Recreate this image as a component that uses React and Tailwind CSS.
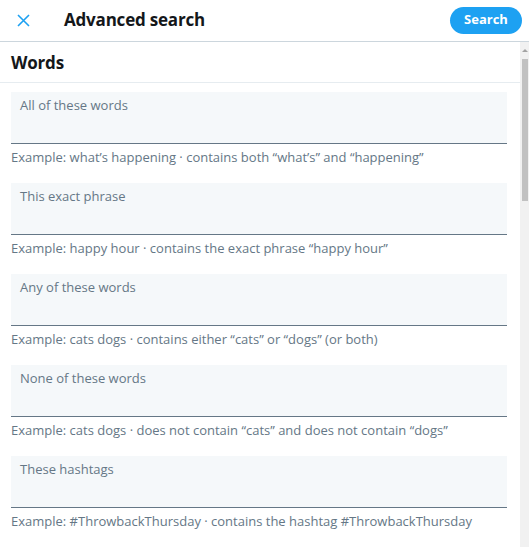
import React from "react";

const fields = [
  {
    label: "All of these words",
    example: "Example: what’s happening · contains both “what’s” and “happening”",
  },
  {
    label: "This exact phrase",
    example: "Example: happy hour · contains the exact phrase “happy hour”",
  },
  {
    label: "Any of these words",
    example: "Example: cats dogs · contains either “cats” or “dogs” (or both)",
  },
  {
    label: "None of these words",
    example: "Example: cats dogs · does not contain “cats” and does not contain “dogs”",
  },
  {
    label: "These hashtags",
    example: "Example: #ThrowbackThursday · contains the hashtag #ThrowbackThursday",
  },
];

const Field = ({ label, example }) => (
  <div className="mb-[16px]">
    <div className="h-[52px] bg-[#f5f8fa] border-b border-[#657786] px-[9px] pt-[4px]">
      <div className="text-[13px] leading-[18px] text-[#657786]">{label}</div>
    </div>
    <p className="pt-[3px] text-[13px] leading-[20px] text-[#657786]">{example}</p>
  </div>
);

export default function App() {
  return (
    <div
      className="w-[529px] h-[547px] bg-white flex flex-col overflow-hidden"
      style={{ fontFamily: '"Open Sans", "Noto Sans", Arial, sans-serif' }}
    >
      {/* header */}
      <div className="h-[42px] shrink-0 flex items-center border-b border-[#ccd6dd] pl-[17px] pr-[7px] pb-[1px]">
        <svg width="13" height="13" viewBox="0 0 13 13" className="shrink-0">
          <path d="M1 1 L12 12 M12 1 L1 12" stroke="#1da1f2" strokeWidth="1.6" fill="none" />
        </svg>
        <h1 className="ml-[34px] text-[17px] font-bold text-[#14171a] tracking-[-0.2px]">Advanced search</h1>
        <button className="ml-auto w-[72px] h-[27px] rounded-full bg-[#1da1f2] text-white text-[13px] font-bold">
          Search
        </button>
      </div>

      <div className="flex flex-1 min-h-0">
        <div className="flex-1 min-w-0">
          <div className="h-[41px] flex items-center border-b border-[#e6ecf0] px-[11px] pt-[1px]">
            <h2 className="text-[17px] font-bold text-[#14171a] tracking-[-0.2px]">Words</h2>
          </div>
          <div className="pt-[9px] pl-[11px] pr-[13px]">
            {fields.map((f) => (
              <Field key={f.label} {...f} />
            ))}
          </div>
        </div>

        {/* scrollbar */}
        <div className="w-[9px] shrink-0 bg-[#f1f1f1] flex flex-col items-center">
          <div className="h-[17px] flex items-center justify-center">
            <div className="w-0 h-0 border-l-[3px] border-r-[3px] border-b-[3px] border-l-transparent border-r-transparent border-b-[#a3a3a3]" />
          </div>
          <div className="w-[6px] h-[142px] bg-[#c1c1c1]" />
        </div>
      </div>
    </div>
  );
}
